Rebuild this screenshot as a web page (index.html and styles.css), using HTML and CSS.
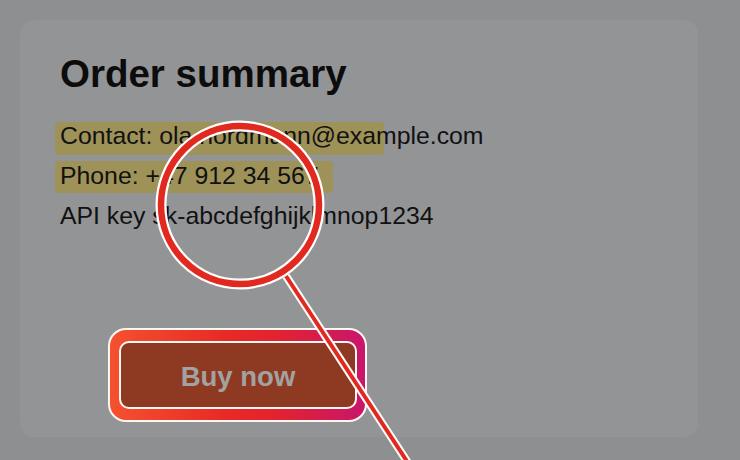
FILE: index.html
```html
<!DOCTYPE html>
<html lang="en">
<head>
<meta charset="utf-8">
<title>Order summary</title>
<link rel="stylesheet" href="styles.css">
</head>
<body>
<main class="card">
  <h1 class="title">Order summary</h1>
  <div class="details">
    <p class="line"><span class="mark mark-contact"></span><span class="text">Contact: ola.nordmann@example.com</span></p>
    <p class="line"><span class="mark mark-phone"></span><span class="text">Phone: +47 912 34 567</span></p>
    <p class="line"><span class="text">API key sk-abcdefghijklmnop1234</span></p>
  </div>
  <div class="btn-frame">
    <button class="buy" type="button">Buy now</button>
  </div>
</main>
<svg class="lens" width="740" height="460" viewBox="0 0 740 460" aria-hidden="true">
  <line x1="286" y1="276" x2="414" y2="472" stroke="#ffffff" stroke-width="8"/>
  <line x1="286" y1="276" x2="414" y2="472" stroke="#e2291f" stroke-width="4"/>
  <circle cx="240" cy="205" r="79" fill="none" stroke="#ffffff" stroke-width="11"/>
  <circle cx="240" cy="205" r="79" fill="none" stroke="#e2291f" stroke-width="6.5"/>
</svg>
</body>
</html>
```
FILE: styles.css
```css
* { box-sizing: border-box; }
html, body {
  margin: 0;
  padding: 0;
}
body {
  width: 740px;
  height: 460px;
  overflow: hidden;
  position: relative;
  background: #8e8f91;
  font-family: "Liberation Sans", Arial, sans-serif;
  color: #111;
  padding: 20px 42px 23px 20px;
}
.card {
  height: 417px;
  background: #939496;
  border-radius: 14px;
  padding: 32px 40px 0 40px;
}
.title {
  margin: 0;
  font-size: 38.5px;
  line-height: 44px;
  font-weight: 700;
  color: #0c0c0d;
}
.details {
  margin-top: 20px;
}
.line {
  position: relative;
  margin: 0;
  font-size: 24.8px;
  line-height: 40px;
  white-space: nowrap;
}
.text {
  position: relative;
}
.mark {
  position: absolute;
  left: -5px;
  top: 6px;
  height: 33px;
  border-radius: 4px;
  background: #9f9258;
}
.mark-contact { width: 329px; }
.mark-phone { width: 278px; top: 5px; height: 32px; }
.btn-frame {
  margin: 92px 0 0 48px;
  width: 259px;
  height: 94px;
  border: 2px solid #fff7f2;
  border-radius: 18px;
  padding: 11px 8px 11px 9px;
  background: linear-gradient(90deg, #f4512f 0%, #e82a26 45%, #e3232f 65%, #c8166c 100%);
}
.buy {
  display: block;
  width: 100%;
  height: 100%;
  border: 2px solid #fff7f2;
  border-radius: 10px;
  background: #8e3a22;
  color: #a3a2a2;
  font-family: "Liberation Sans", Arial, sans-serif;
  font-size: 27.5px;
  font-weight: 700;
  padding: 4px 0 0 0;
}
.lens {
  position: absolute;
  left: 0;
  top: 0;
}
```
